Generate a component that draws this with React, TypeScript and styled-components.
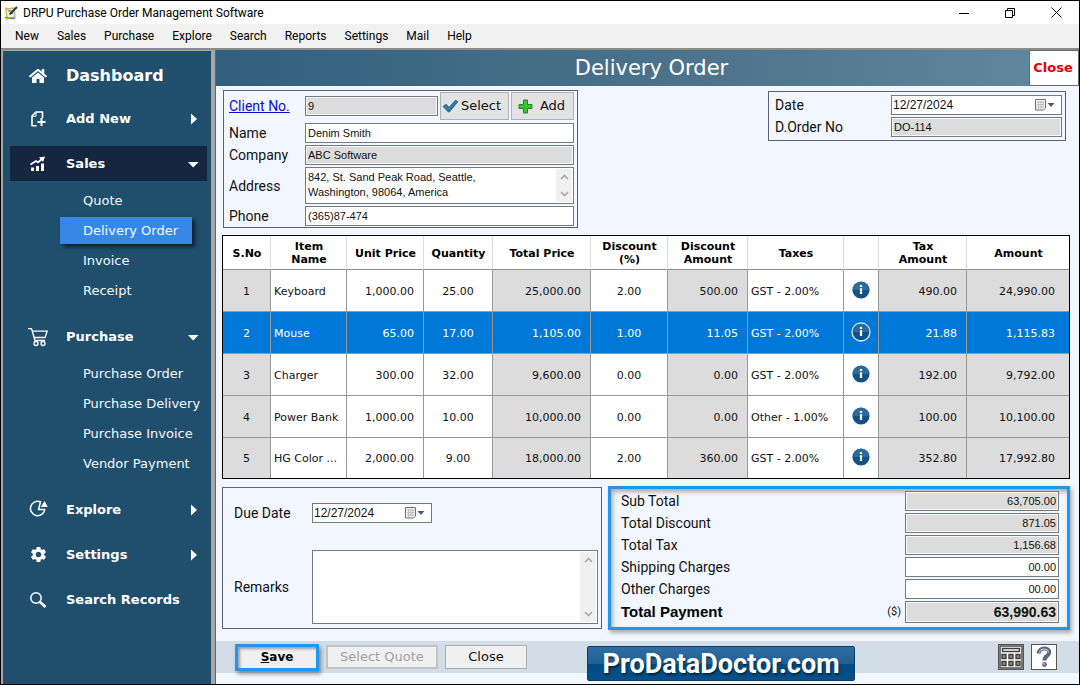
import React from "react";
import styled, { createGlobalStyle, css } from "styled-components";
import { MdSettings } from "react-icons/md";
import { FaHome } from "react-icons/fa";

const verdana = `"DejaVu Sans", sans-serif`;
const label = `Roboto, "Liberation Sans", sans-serif`;
const field = `"Liberation Sans", sans-serif`;

const Global = createGlobalStyle`
  *, *::before, *::after { box-sizing: border-box; }
  body { margin: 0; background: #000; font-family: ${verdana}; color: #111; }
  button, input, textarea { font: inherit; color: inherit; margin: 0; border-radius: 0; }
  svg { display: block; flex: none; }
`;

/* ---------- window frame ---------- */

const Window = styled.div`
  min-height: 100vh;
  display: flex;
  flex-direction: column;
  border: 1px solid #000;
  background: #fff;
`;

const TitleBar = styled.header`
  height: 23px;
  display: flex;
  align-items: center;
  gap: 5px;
  padding-left: 3px;
  background: #fff;
`;

const WindowTitle = styled.h1`
  margin: 0;
  flex: 1;
  font: 400 12px/20px ${label};
  color: #000;
`;

const WindowControls = styled.div`
  display: flex;
`;

const WindowButton = styled.button`
  width: 46px;
  height: 22px;
  padding: 0;
  border: 0;
  background: none;
  display: flex;
  align-items: center;
  justify-content: center;
`;

const MenuBar = styled.nav`
  height: 24px;
  display: flex;
  align-items: center;
  gap: 18px;
  padding-left: 14px;
  background: #f1f1f1;
`;

const MenuItem = styled.button`
  border: 0;
  padding: 0;
  background: none;
  font: 400 12px/20px ${label};
  color: #000;
`;

const Workspace = styled.div`
  flex: 1;
  display: flex;
  border-top: 2px solid #8c8c8c;
  background: #a6a6a6;
`;

/* ---------- sidebar ---------- */

const Sidebar = styled.aside`
  flex: none;
  width: 208px;
  margin: 1px 4px 0 2px;
  padding: 9px 4px 8px 7px;
  background: #204f6e;
  color: #fff;
`;

const SectionButton = styled.button<{ $active?: boolean; $large?: boolean }>`
  width: 100%;
  height: ${(p) => (p.$large ? 31 : 35)}px;
  margin-top: ${(p) => (p.$large ? 0 : 10)}px;
  padding: 0 7px 0 16px;
  display: flex;
  align-items: center;
  border: 0;
  background: ${(p) => (p.$active ? "#14273e" : "none")};
  color: #fff;
  font: 700 ${(p) => (p.$large ? 16 : 13)}px/20px ${verdana};
  text-align: left;
`;

const SectionIcon = styled.span`
  width: 24px;
  margin-right: 16px;
  display: flex;
  justify-content: center;
`;

const SectionLabel = styled.span`
  flex: 1;
`;

const SubList = styled.ul`
  list-style: none;
  margin: 0;
  padding: 4px 0 4px 50px;
`;

const SubItem = styled.li`
  height: 30px;
  display: flex;
  align-items: center;
`;

const SubLink = styled.a<{ $active?: boolean }>`
  padding: 0 14px 0 23px;
  font: 400 13px/27px ${verdana};
  color: #f4f8fb;
  text-decoration: none;
  white-space: nowrap;
  margin-right: -8px;
  ${(p) =>
    p.$active &&
    css`
      background: #3887e8;
      box-shadow: 3px 3px 4px rgba(0, 0, 0, 0.6);
    `}
`;

/* ---------- main pane ---------- */

const Main = styled.main`
  flex: 1;
  min-width: 0;
  display: flex;
  flex-direction: column;
  border-left: 1px solid #5c6672;
  background: #f2f7ff;
`;

const PageHeader = styled.div`
  height: 36px;
  display: flex;
  align-items: center;
  background: linear-gradient(90deg, #31607e, #4d738c 55%, #6389a1);
`;

const PageTitle = styled.h2`
  margin: 0;
  flex: 1;
  padding-left: 58px;
  text-align: center;
  font: 400 21px/38px ${verdana};
  color: #fff;
`;

const HeaderClose = styled.button`
  width: 50px;
  height: 36px;
  padding: 0 2px 0 0;
  border: 1px solid #6a6a6a;
  background: #fff;
  color: #e60000;
  font: 700 13px/20px ${verdana};
`;

const Content = styled.div`
  padding: 4px 9px 11px 6px;
  display: flex;
  flex-direction: column;
  gap: 7px;
`;

const TopRow = styled.div`
  display: flex;
  justify-content: space-between;
  align-items: flex-start;
  padding: 0 4px 0 1px;
`;

const Panel = styled.section`
  border: 1px solid #5b6170;
`;

const ClientPanel = styled(Panel)`
  width: 355px;
  padding: 1px 3px 0 5px;
`;

const OrderPanel = styled(Panel)`
  width: 298px;
  margin-top: 1px;
  padding: 2px 3px 2px 6px;
`;

const FormRow = styled.div<{ $height: number; $label: number; $gap?: number }>`
  display: grid;
  grid-template-columns: ${(p) => p.$label}px minmax(0, 1fr);
  align-items: center;
  height: ${(p) => p.$height}px;
  margin-bottom: ${(p) => p.$gap ?? 0}px;
`;

const labelText = css`
  font: 400 14px/20px ${label};
  color: #111;
`;

const FieldLabel = styled.label`
  ${labelText}
`;

const FieldLink = styled.a`
  ${labelText}
  color: #0a0adc;
  text-decoration: underline;
`;

const TextField = styled.input<{ $right?: boolean; $strong?: boolean }>`
  width: 100%;
  min-width: 0;
  height: ${(p) => (p.$strong ? 22 : 20)}px;
  padding: 0 2px;
  border: 1px solid #757980;
  background: #fff;
  font: ${(p) => (p.$strong ? `700 14px/18px ${field}` : `400 11px/16px ${field}`)};
  color: #111;
  text-align: ${(p) => (p.$right ? "right" : "left")};
  outline: 0;

  &:read-only {
    background: #dcdcdc;
    box-shadow: inset 0 0 0 1px #f8f8f8;
  }
`;

const ClientPicker = styled.div`
  display: grid;
  grid-template-columns: 1fr 69px 63px;
  align-items: center;
  gap: 2px;
`;

const PickButton = styled.button`
  height: 28px;
  padding: 0 6px 0 0;
  display: flex;
  align-items: center;
  justify-content: center;
  gap: 2px;
  border: 1px solid #adb2b8;
  background: #e2e2e2;
  color: #111;
  font: 400 13px/20px ${verdana};
`;

const AddButton = styled(PickButton)`
  padding: 0 2px 0 0;
  gap: 7px;
`;

const AreaFrame = styled.div<{ $height: number }>`
  display: flex;
  height: ${(p) => p.$height}px;
  padding: 1px;
  border: 1px solid #757980;
  background: #fff;
`;

const Area = styled.textarea`
  flex: 1;
  min-width: 0;
  padding: 1px;
  border: 0;
  outline: 0;
  resize: none;
  overflow: hidden;
  background: none;
  font: 400 11px/15px ${field};
`;

const ScrollRail = styled.div`
  width: 16px;
  display: flex;
  flex-direction: column;
  justify-content: space-between;
  align-items: center;
  padding: 5px 0;
  background: #f0f0f0;
`;

const DateFrame = styled.div`
  display: flex;
  align-items: center;
  height: 20px;
  padding-right: 5px;
  border: 1px solid #757980;
  background: #fff;
`;

const DateInput = styled.input`
  flex: 1;
  min-width: 0;
  height: 18px;
  padding: 0 1px;
  border: 0;
  outline: 0;
  background: none;
  font: 400 12px/16px ${field};
`;

const DateButton = styled.button`
  padding: 0;
  border: 0;
  background: none;
`;

/* ---------- items table ---------- */

const Items = styled.table`
  width: 100%;
  table-layout: fixed;
  border: 1px solid #000;
  border-collapse: separate;
  border-spacing: 0;
  background: #fff;
`;

const HeadCell = styled.th`
  height: 34px;
  padding: 1px 0 0 1px;
  border-right: 1px solid #dcdcdc;
  border-bottom: 1px solid #8e8e8e;
  font: 700 11px/13px ${verdana};
  color: #000;
  &:last-child {
    border-right: 0;
  }
`;

const BodyRow = styled.tr<{ $selected?: boolean }>`
  ${(p) =>
    p.$selected &&
    css`
      color: #fff;
      td {
        background: #0078d7;
      }
    `}
  &:last-child td {
    height: 40px;
    border-bottom: 0;
  }
`;

const Cell = styled.td<{ $align?: "left" | "right"; $locked?: boolean; $wide?: boolean }>`
  height: 42px;
  padding: ${(p) => (p.$align === "left" ? "2px 0 0 3px" : p.$align === "right" ? `2px ${p.$wide ? 14 : 9}px 0 0` : "2px 0 0")};
  border-right: 1px solid #989898;
  border-bottom: 1px solid #989898;
  background: ${(p) => (p.$locked ? "#dcdcdc" : "#fff")};
  font: 400 11px/14px ${verdana};
  text-align: ${(p) => p.$align ?? "center"};
  white-space: nowrap;
  &:last-child {
    border-right: 0;
  }
`;

const InfoButton = styled.button`
  width: 20px;
  height: 20px;
  margin: 0 auto 4px;
  padding: 0;
  border: 0;
  background: none;
  display: block;
`;

/* ---------- lower panels ---------- */

const LowerRow = styled.div`
  display: grid;
  grid-template-columns: minmax(0, 380fr) minmax(0, 462fr);
  gap: 6px;
`;

const DuePanel = styled(Panel)`
  margin: 1px 0;
  padding: 15px 3px 0 11px;
`;

const DueRow = styled.div<{ $gap?: number }>`
  display: grid;
  grid-template-columns: 78px minmax(0, 1fr);
  align-items: center;
  margin-bottom: ${(p) => p.$gap ?? 0}px;
`;

const DueDate = styled(DateFrame)`
  width: 120px;
`;

const TotalsPanel = styled.section`
  padding: 1px 8px 3px 10px;
  border: 3px solid #2196ec;
  box-shadow: 2px 3px 4px rgba(0, 0, 0, 0.3), inset 2px 3px 4px rgba(0, 0, 0, 0.3);
`;

const TotalRow = styled.div<{ $strong?: boolean }>`
  display: grid;
  grid-template-columns: 1fr auto 154px;
  align-items: center;
  gap: 4px;
  height: ${(p) => (p.$strong ? 24 : 22)}px;
`;

const TotalLabel = styled(FieldLabel)<{ $strong?: boolean }>`
  ${(p) => p.$strong && `font: 700 15px/20px "Liberation Sans", sans-serif; color: #000;`}
`;

const Currency = styled.span`
  font: 400 11px/16px ${label};
`;

/* ---------- footer ---------- */

const Footer = styled.footer`
  position: relative;
  height: 32px;
  display: flex;
  align-items: center;
  gap: 7px;
  padding: 0 22px 0 19px;
  background: #d3dde8;
`;

const ActionButton = styled.button<{ $width: number }>`
  width: ${(p) => p.$width}px;
  height: 24px;
  padding: 0;
  border: 1px solid #adadad;
  background: #f0f0f0;
  font: 400 13px/20px ${verdana};
  color: #111;
  &:disabled {
    border: 2px solid #c0c4c8;
    color: #a0a0a0;
  }
`;

const SaveButton = styled(ActionButton)`
  height: 27px;
  border: 3px solid #2196ec;
  box-shadow: 2px 3px 4px rgba(0, 0, 0, 0.4), inset 2px 2px 3px rgba(0, 0, 0, 0.35);
  font-size: 12px;
  font-weight: 700;
  color: #000;
`;

const FooterSpace = styled.div`
  flex: 1;
`;

const ToolButton = styled.button`
  width: 26px;
  height: 26px;
  padding: 0;
  border: 1px solid #555;
  background: #fff;
  display: flex;
  align-items: center;
  justify-content: center;
`;

const Brand = styled.a`
  position: absolute;
  top: 5px;
  left: 43%;
  width: 268px;
  height: 35px;
  border: 1px solid #0f3c61;
  border-radius: 2px;
  background: linear-gradient(#2f6ea3, #1f6095 50%, #034a82 52%, #075088);
  font: 700 27px/35px ${label};
  color: #fff;
  text-align: center;
  text-decoration: none;
  text-shadow: 1px 2px 2px rgba(0, 0, 0, 0.5);
`;

/* ---------- icons ---------- */

const AppIcon = () => (
  <svg width="14" height="16" viewBox="0 0 14 16" fill="none">
    <path d="M2 4l8-1 1 9-8 2z" fill="#e9f1f7" stroke="#d9b43a" strokeWidth="1.4" />
    <path d="M4 6c3-1 2 1 5 0M5 9l4-1M1 13c3-2 5 2 10 0" stroke="#4a82ba" strokeWidth="1.3" />
    <path d="M6 9l7-7" stroke="#1f2f55" strokeWidth="1.8" />
    <path d="M1 3l3 1M2 14l3-1" stroke="#e3b82a" strokeWidth="1.6" />
  </svg>
);

const AddPageIcon = () => (
  <svg width="18" height="18" viewBox="0 0 18 18" fill="none" stroke="#fff" strokeWidth="1.6">
    <path d="M7.500 15.700H3V6L7 2H13.500V8" strokeLinejoin="round" />
    <path d="M7 2v4.200H3" strokeWidth="1" />
    <path d="M12.500 8v8M8.500 12h8" strokeWidth="2" />
  </svg>
);

const ChartIcon = () => (
  <svg width="18" height="18" viewBox="0 0 18 18" fill="#fff">
    <path d="M2 12.500h3V16H2zM7 11h3v5H7zM12 8.500h3V16h-3z" />
    <path d="M1.500 9.500L7 6l2 1.500 4-3.500" fill="none" stroke="#fff" strokeWidth="1.700" />
    <path d="M10 2.500l6-1-2 5.500z" />
  </svg>
);

const CartIcon = () => (
  <svg width="22" height="20" viewBox="0 0 22 20" fill="none" stroke="#fff" strokeWidth="1.3">
    <path d="M1 1.600h3.500L8 13.500h10M5.300 4.200H20.200L18 10.500H7.200" />
    <circle cx="9" cy="16.500" r="2" />
    <circle cx="16" cy="16.500" r="2" />
  </svg>
);

const PieIcon = () => (
  <svg width="20" height="20" viewBox="0 0 20 20" fill="none" stroke="#fff" strokeWidth="1.5">
    <path d="M12.500 1.800A7.200 7.200 0 1 0 16.800 9.500H10.500z" strokeLinejoin="round" />
    <path d="M16.500 1l3.300 6h-7z" fill="#fff" stroke="none" />
  </svg>
);

const SearchIcon = () => (
  <svg width="18" height="18" viewBox="0 0 18 18" fill="none" stroke="#fff">
    <circle cx="7" cy="7" r="5.200" strokeWidth="1.5" />
    <path d="M11 11l5.500 5" strokeWidth="2.600" />
  </svg>
);

const ArrowRight = () => (
  <svg width="12" height="12" viewBox="0 0 12 12" fill="#fff">
    <path d="M3 .500v11l6-5.500z" />
  </svg>
);

const ArrowDown = () => (
  <svg width="12" height="12" viewBox="0 0 12 12" fill="#fff">
    <path d="M0 4h10.500L5.200 9.500z" />
  </svg>
);

const CheckIcon = () => (
  <svg width="17" height="14" viewBox="0 0 17 14">
    <path d="M1 7.500L4 5l3 3.200L13.500 1 16 2.800 7.500 13H6.200z" fill="#2f78a6" stroke="#1f5d88" strokeWidth=".6" />
  </svg>
);

const PlusIcon = () => (
  <svg width="15" height="15" viewBox="0 0 15 15">
    <path d="M5.500 1h4v4.500H14v4H9.500V14h-4V9.500H1v-4h4.500z" fill="#3fbf3a" stroke="#1c8a22" />
  </svg>
);

const CalendarIcon = () => (
  <svg width="22" height="14" viewBox="0 0 22 14">
    <path d="M1.500 1.500h10v8.500l-2 2h-8z" fill="#f2f2f2" stroke="#707070" />
    <path d="M3 4h7M3 6.500h7M3 9h6M4.500 3v8M7 3v8M9.200 3v7" stroke="#b4b4b4" strokeWidth=".8" />
    <path d="M13.500 5h7L17 9z" fill="#45597d" />
  </svg>
);

const Chevron = ({ up }: { up?: boolean }) => (
  <svg width="9" height="6" viewBox="0 0 9 6" fill="none" stroke="#a9a9a9" strokeWidth="1.700">
    <path d={up ? "M1 5l3.500-3.500L8 5" : "M1 1l3.500 3.500L8 1"} />
  </svg>
);

const InfoIcon = ({ ring }: { ring?: boolean }) => (
  <svg width="20" height="20" viewBox="0 0 20 20">
    <circle cx="10" cy="10" r={ring ? 9 : 8.6} fill="#125089" stroke={ring ? "#dcebf8" : "none"} strokeWidth="1.300" />
    <path d="M1.800 10a8.200 8.200 0 0 1 16.400 0z" fill="#2b6b9d" />
    <path d="M8.900 5h2.200v2H8.900zM8.900 8.200h2.200V14H8.900z" fill="#fff" />
  </svg>
);

const CalculatorIcon = () => (
  <svg width="24" height="24" viewBox="0 0 24 24">
    <path d="M1 1h22v22H1z" fill="#fff" stroke="#4a4a4a" strokeWidth="1.500" />
    <path d="M3.500 3.500h17v3h-17z" fill="#fff" stroke="#3f3f3f" strokeWidth="1.400" />
    {[9, 16].map((y) =>
      [3, 10, 17].map((x) => (
        <path key={`${x}-${y}`} d={`M${x} ${y + 0.5}h4v4h-4z`} fill="#8a8a8a" stroke="#3f3f3f" strokeWidth="1.400" />
      )),
    )}
  </svg>
);

const HelpIcon = () => (
  <svg width="18" height="22" viewBox="0 0 18 22" fill="none">
    <path d="M4 7.500C3.500 1 14.500 1 14.200 6.500 14 10.500 9.500 9.500 9.500 14.500" stroke="#566684" strokeWidth="4" />
    <path d="M4.500 6.500c.500-4.500 8.500-4.500 9 0" stroke="#b4bfd0" strokeWidth="1.200" />
    <circle cx="9.500" cy="18.500" r="2.400" fill="#566684" />
    <circle cx="9" cy="18" r="1" fill="#b4bfd0" />
  </svg>
);

/* ---------- data ---------- */

const menu = ["New", "Sales", "Purchase", "Explore", "Search", "Reports", "Settings", "Mail", "Help"];

type Section = {
  name: string;
  icon: React.ReactNode;
  arrow?: "right" | "down";
  active?: boolean;
  large?: boolean;
  items?: string[];
};

const sections: Section[] = [
  { name: "Dashboard", icon: <FaHome size={18} />, large: true },
  { name: "Add New", icon: <AddPageIcon />, arrow: "right" },
  {
    name: "Sales",
    icon: <ChartIcon />,
    arrow: "down",
    active: true,
    items: ["Quote", "Delivery Order", "Invoice", "Receipt"],
  },
  {
    name: "Purchase",
    icon: <CartIcon />,
    arrow: "down",
    items: ["Purchase Order", "Purchase Delivery", "Purchase Invoice", "Vendor Payment"],
  },
  { name: "Explore", icon: <PieIcon />, arrow: "right" },
  { name: "Settings", icon: <MdSettings size={19} />, arrow: "right" },
  { name: "Search Records", icon: <SearchIcon /> },
];

const columns: { title: React.ReactNode; width: number }[] = [
  { title: "S.No", width: 48 },
  { title: <>Item<br />Name</>, width: 76 },
  { title: "Unit Price", width: 77 },
  { title: "Quantity", width: 69 },
  { title: "Total Price", width: 98 },
  { title: <>Discount<br />(%)</>, width: 77 },
  { title: <>Discount<br />Amount</>, width: 80 },
  { title: "Taxes", width: 96 },
  { title: "", width: 35 },
  { title: <>Tax<br />Amount</>, width: 88 },
  { title: "Amount", width: 102 },
];
const totalWidth = columns.reduce((sum, c) => sum + c.width, 0);

const rows = [
  ["Keyboard", "1,000.00", "25.00", "25,000.00", "2.00", "500.00", "GST - 2.00%", "490.00", "24,990.00"],
  ["Mouse", "65.00", "17.00", "1,105.00", "1.00", "11.05", "GST - 2.00%", "21.88", "1,115.83"],
  ["Charger", "300.00", "32.00", "9,600.00", "0.00", "0.00", "GST - 2.00%", "192.00", "9,792.00"],
  ["Power Bank", "1,000.00", "10.00", "10,000.00", "0.00", "0.00", "Other - 1.00%", "100.00", "10,100.00"],
  ["HG Color ...", "2,000.00", "9.00", "18,000.00", "2.00", "360.00", "GST - 2.00%", "352.80", "17,992.80"],
];

const totals = [
  { id: "sub-total", name: "Sub Total", value: "63,705.00", locked: true },
  { id: "total-discount", name: "Total Discount", value: "871.05", locked: true },
  { id: "total-tax", name: "Total Tax", value: "1,156.68", locked: true },
  { id: "shipping", name: "Shipping Charges", value: "00.00" },
  { id: "other", name: "Other Charges", value: "00.00" },
  { id: "payment", name: "Total Payment", value: "63,990.63", locked: true, strong: true },
];

const Rail = () => (
  <ScrollRail aria-hidden="true">
    <Chevron up />
    <Chevron />
  </ScrollRail>
);

export default function App() {
  return (
    <Window>
      <Global />
      <TitleBar>
        <AppIcon />
        <WindowTitle>DRPU Purchase Order Management Software</WindowTitle>
        <WindowControls>
          <WindowButton aria-label="Minimize">
            <svg width="10" height="10" viewBox="0 0 10 10"><path d="M0 5.500h10" stroke="#000" /></svg>
          </WindowButton>
          <WindowButton aria-label="Restore">
            <svg width="10" height="10" viewBox="0 0 10 10" fill="none" stroke="#000">
              <path d="M.500 2.500h7v7h-7zM2.500 2.500v-2h7v7h-2" />
            </svg>
          </WindowButton>
          <WindowButton aria-label="Close window">
            <svg width="11" height="11" viewBox="0 0 11 11"><path d="M.500.500l10 10M10.500.500l-10 10" stroke="#000" /></svg>
          </WindowButton>
        </WindowControls>
      </TitleBar>
      <MenuBar>
        {menu.map((name) => <MenuItem key={name}>{name}</MenuItem>)}
      </MenuBar>
      <Workspace>
        <Sidebar>
          {sections.map((s) => (
            <React.Fragment key={s.name}>
              <SectionButton $active={s.active} $large={s.large}>
                <SectionIcon>{s.icon}</SectionIcon>
                <SectionLabel>{s.name}</SectionLabel>
                {s.arrow === "right" && <ArrowRight />}
                {s.arrow === "down" && <ArrowDown />}
              </SectionButton>
              {s.items && (
                <SubList>
                  {s.items.map((item) => (
                    <SubItem key={item}>
                      <SubLink href="#" $active={item === "Delivery Order"}>{item}</SubLink>
                    </SubItem>
                  ))}
                </SubList>
              )}
            </React.Fragment>
          ))}
        </Sidebar>
        <Main>
          <PageHeader>
            <PageTitle>Delivery Order</PageTitle>
            <HeaderClose>Close</HeaderClose>
          </PageHeader>
          <Content>
            <TopRow>
              <ClientPanel>
                <FormRow $height={28} $label={76} $gap={2}>
                  <FieldLink href="#">Client No.</FieldLink>
                  <ClientPicker>
                    <TextField aria-label="Client No." readOnly defaultValue="9" />
                    <PickButton><CheckIcon />Select</PickButton>
                    <AddButton><PlusIcon />Add</AddButton>
                  </ClientPicker>
                </FormRow>
                <FormRow $height={22} $label={76}>
                  <FieldLabel htmlFor="name">Name</FieldLabel>
                  <TextField id="name" defaultValue="Denim Smith" />
                </FormRow>
                <FormRow $height={22} $label={76}>
                  <FieldLabel htmlFor="company">Company</FieldLabel>
                  <TextField id="company" readOnly defaultValue="ABC Software" />
                </FormRow>
                <FormRow $height={39} $label={76}>
                  <FieldLabel htmlFor="address">Address</FieldLabel>
                  <AreaFrame $height={37}>
                    <Area id="address" defaultValue={"842, St. Sand Peak Road, Seattle,\nWashington, 98064, America"} />
                    <Rail />
                  </AreaFrame>
                </FormRow>
                <FormRow $height={22} $label={76}>
                  <FieldLabel htmlFor="phone">Phone</FieldLabel>
                  <TextField id="phone" defaultValue="(365)87-474" />
                </FormRow>
              </ClientPanel>
              <OrderPanel>
                <FormRow $height={22} $label={116}>
                  <FieldLabel htmlFor="date">Date</FieldLabel>
                  <DateFrame>
                    <DateInput id="date" defaultValue="12/27/2024" />
                    <DateButton aria-label="Pick date"><CalendarIcon /></DateButton>
                  </DateFrame>
                </FormRow>
                <FormRow $height={22} $label={116}>
                  <FieldLabel htmlFor="order-no">D.Order No</FieldLabel>
                  <TextField id="order-no" readOnly defaultValue="DO-114" />
                </FormRow>
              </OrderPanel>
            </TopRow>
            <Items>
              <colgroup>
                {columns.map((c, i) => (
                  <col key={i} style={{ width: `${(c.width / totalWidth) * 100}%` }} />
                ))}
              </colgroup>
              <thead>
                <tr>{columns.map((c, i) => <HeadCell key={i} scope="col">{c.title}</HeadCell>)}</tr>
              </thead>
              <tbody>
                {rows.map((r, i) => (
                  <BodyRow key={r[0]} $selected={i === 1}>
                    <Cell $locked>{i + 1}</Cell>
                    <Cell $align="left">{r[0]}</Cell>
                    <Cell $align="right">{r[1]}</Cell>
                    <Cell>{r[2]}</Cell>
                    <Cell $align="right" $locked>{r[3]}</Cell>
                    <Cell>{r[4]}</Cell>
                    <Cell $align="right" $locked>{r[5]}</Cell>
                    <Cell $align="left">{r[6]}</Cell>
                    <Cell>
                      <InfoButton aria-label={`Tax details for ${r[0]}`}><InfoIcon ring={i === 1} /></InfoButton>
                    </Cell>
                    <Cell $align="right" $locked>{r[7]}</Cell>
                    <Cell $align="right" $locked $wide>{r[8]}</Cell>
                  </BodyRow>
                ))}
              </tbody>
            </Items>
            <LowerRow>
              <DuePanel>
                <DueRow $gap={27}>
                  <FieldLabel htmlFor="due">Due Date</FieldLabel>
                  <DueDate>
                    <DateInput id="due" defaultValue="12/27/2024" />
                    <DateButton aria-label="Pick due date"><CalendarIcon /></DateButton>
                  </DueDate>
                </DueRow>
                <DueRow>
                  <FieldLabel htmlFor="remarks">Remarks</FieldLabel>
                  <AreaFrame $height={74}>
                    <Area id="remarks" />
                    <Rail />
                  </AreaFrame>
                </DueRow>
              </DuePanel>
              <TotalsPanel>
                {totals.map((t) => (
                  <TotalRow key={t.id} $strong={t.strong}>
                    <TotalLabel htmlFor={t.id} $strong={t.strong}>{t.name}</TotalLabel>
                    <Currency>{t.strong ? "($)" : ""}</Currency>
                    <TextField id={t.id} $right $strong={t.strong} readOnly={t.locked} defaultValue={t.value} />
                  </TotalRow>
                ))}
              </TotalsPanel>
            </LowerRow>
          </Content>
          <Footer>
            <SaveButton $width={84}><u>S</u>ave</SaveButton>
            <ActionButton $width={112} disabled>Select Quote</ActionButton>
            <ActionButton $width={82}>Close</ActionButton>
            <FooterSpace />
            <ToolButton aria-label="Calculator"><CalculatorIcon /></ToolButton>
            <ToolButton aria-label="Help"><HelpIcon /></ToolButton>
            <Brand href="#">ProDataDoctor.com</Brand>
          </Footer>
        </Main>
      </Workspace>
    </Window>
  );
}
